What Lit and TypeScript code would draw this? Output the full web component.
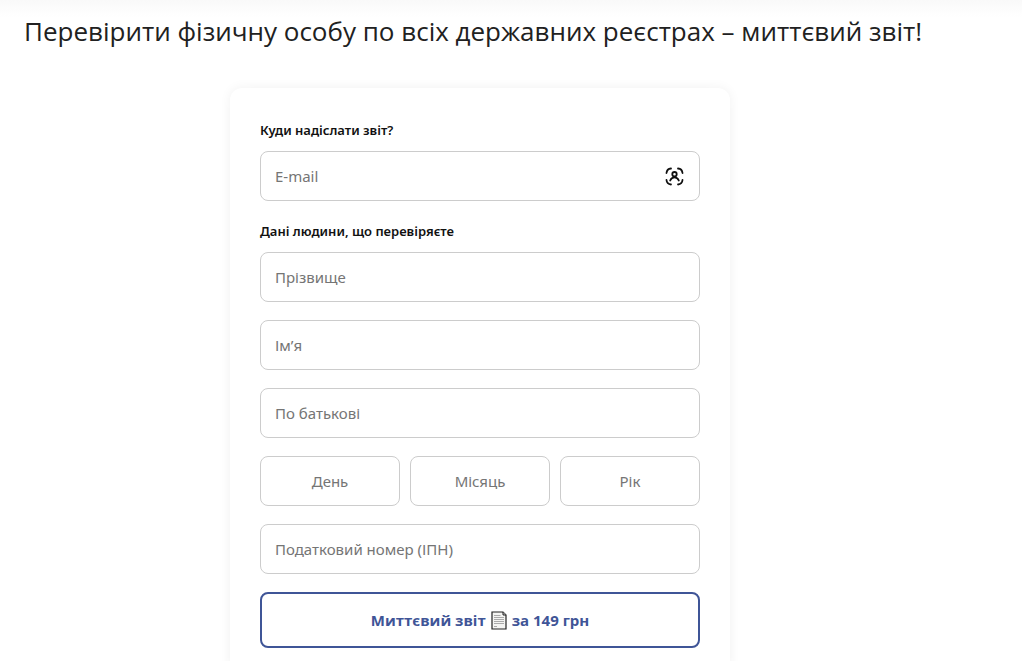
import { LitElement, html, css, svg } from "lit";
import { customElement } from "lit/decorators.js";

const scanIcon = svg`
  <path d="M1.500 6C1.700 3.500 3.500 1.700 6 1.500M13 1.500C15.500 1.700 17.300 3.500 17.500 6M17.500 13C17.300 15.500 15.500 17.300 13 17.500M6 17.500C3.500 17.300 1.700 15.500 1.500 13" />
  <circle cx="9.500" cy="7.200" r="2.200" />
  <path d="M5.200 13.500C6 11.500 7.500 10.400 9.500 10.400S13 11.500 13.800 13.500" />
`;

@customElement("app-root")
export class AppRoot extends LitElement {
  static styles = css`
    :host {
      display: block;
      background: #fff;
      font-family: "Open Sans", "Noto Sans", sans-serif;
      color: #212529;
    }
    *,
    *::before {
      box-sizing: border-box;
    }
    .page {
      min-height: 100vh;
      padding: 12px 86px 0 24px;
      background: linear-gradient(#f9f9f9, #fefefe 14px, #fff 18px) no-repeat;
    }
    .title {
      margin: 0 0 38px;
      font-size: 26px;
      font-weight: 400;
      line-height: 38px;
      color: #212121;
    }
    .card {
      display: flex;
      flex-direction: column;
      gap: 18px;
      max-width: 500px;
      margin: 0 auto;
      padding: 30px;
      border-radius: 12px;
      background: #fff;
      box-shadow: 0 0 12px rgba(0, 0, 0, 0.06);
    }
    .group {
      display: flex;
      flex-direction: column;
      gap: 18px;
      min-width: 0;
      margin: 0;
      padding: 0;
      border: 0;
    }
    .label {
      display: block;
      margin: 0 0 9px;
      padding: 0;
      font-family: "Noto Sans", "Open Sans", sans-serif;
      font-size: 13px;
      font-weight: 600;
      line-height: 24px;
      color: #111;
    }
    .field {
      display: flex;
      align-items: center;
      min-width: 0;
      height: 50px;
      padding: 0 14px;
      border: 1px solid #ccc;
      border-radius: 8px;
      background: #fff;
    }
    .input {
      flex: 1;
      width: 100%;
      min-width: 0;
      height: 48px;
      padding: 0;
      border: 0;
      outline: 0;
      background: none;
      font-family: "Noto Sans", "Open Sans", sans-serif;
      font-size: 15px;
      color: #212121;
    }
    .input::placeholder {
      color: #757575;
      opacity: 1;
    }
    .field:focus-within {
      border-color: #3f5597;
    }
    .date {
      display: grid;
      grid-template-columns: repeat(3, minmax(0, 1fr));
      gap: 10px;
    }
    .date .input {
      text-align: center;
    }
    .scan {
      width: 19px;
      height: 19px;
      padding: 0;
      border: 0;
      background: none;
      color: #111;
      margin-right: 1px;
    }
    .scan svg {
      display: block;
      fill: none;
      stroke: currentColor;
      stroke-width: 1.8;
      stroke-linecap: round;
    }
    .submit {
      display: flex;
      align-items: center;
      justify-content: center;
      gap: 5px;
      height: 56px;
      border: 2px solid #3f5597;
      border-radius: 8px;
      background: #fff;
      color: #3f5597;
      font-family: "Open Sans", "Noto Sans", sans-serif;
      font-size: 15px;
      font-weight: 700;
      cursor: pointer;
    }
  `;

  private field(name: string, placeholder: string, mode = "text") {
    return html`<div class="field">
      <input class="input" name=${name} inputmode=${mode} placeholder=${placeholder} aria-label=${placeholder} />
    </div>`;
  }

  render() {
    return html`
      <main class="page">
        <h1 class="title">Перевірити фізичну особу по всіх державних реєстрах – миттєвий звіт!</h1>
        <form class="card" @submit=${(e: Event) => e.preventDefault()}>
          <div>
            <label class="label" for="email">Куди надіслати звіт?</label>
            <div class="field">
              <input class="input" id="email" type="email" name="email" placeholder="E-mail" />
              <button class="scan" type="button" aria-label="E-mail">
                <svg width="19" height="19" viewBox="0 0 19 19" aria-hidden="true">${scanIcon}</svg>
              </button>
            </div>
          </div>
          <fieldset class="group">
            <div>
              <label class="label" for="surname">Дані людини, що перевіряєте</label>
              <div class="field">
                <input class="input" id="surname" name="surname" placeholder="Прізвище" />
              </div>
            </div>
            ${this.field("name", "Ім’я")} ${this.field("patronymic", "По батькові")}
            <div class="date">
              ${this.field("day", "День", "numeric")} ${this.field("month", "Місяць", "numeric")}
              ${this.field("year", "Рік", "numeric")}
            </div>
            ${this.field("tax", "Податковий номер (ІПН)", "numeric")}
          </fieldset>
          <button class="submit" type="submit">
            <span>Миттєвий звіт</span>
            <svg width="16" height="19" viewBox="0 0 16 19" aria-hidden="true">
              <path d="M1 1H12L15 4V18H1Z" fill="#f4f4f2" stroke="#222" stroke-width="1.2" />
              <path d="M12 1V4H15" fill="#ccc" stroke="#222" stroke-width="1" />
              <path d="M3 4.500H9.500M3 6.500H13M3 8.500H13M3 10.500H13M3 12.500H13M3 15.500H6" stroke="#aaa" stroke-width="1" />
            </svg>
            <span>за 149 грн</span>
          </button>
        </form>
      </main>
    `;
  }
}
